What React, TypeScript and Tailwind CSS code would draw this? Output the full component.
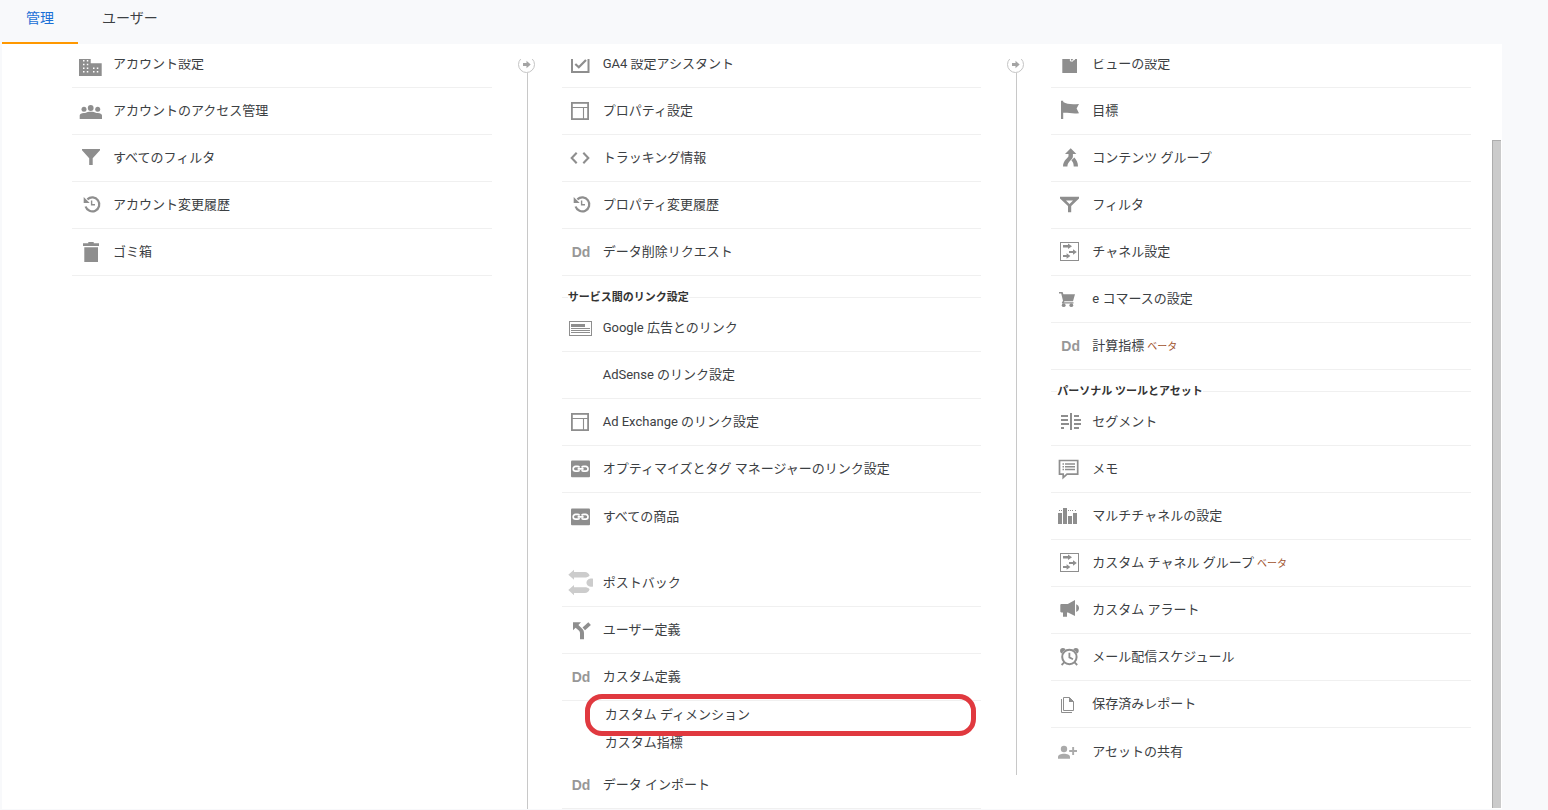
import type { ReactNode } from 'react';

type IconName =
  | 'building'
  | 'people'
  | 'filter'
  | 'history'
  | 'trash'
  | 'check'
  | 'layout'
  | 'code'
  | 'ads'
  | 'link'
  | 'postback'
  | 'split'
  | 'page'
  | 'flag'
  | 'merge'
  | 'funnel'
  | 'channel'
  | 'cart'
  | 'segment'
  | 'memo'
  | 'bars'
  | 'megaphone'
  | 'alarm'
  | 'docs'
  | 'share';

type Item = {
  label: string;
  icon?: IconName | 'Dd';
  beta?: boolean;
  last?: boolean;
  children?: string[];
};

type Group = {
  title?: string;
  spaced?: boolean;
  items: Item[];
};

const ACCOUNT: Group[] = [
  {
    items: [
      { label: 'アカウント設定', icon: 'building' },
      { label: 'アカウントのアクセス管理', icon: 'people' },
      { label: 'すべてのフィルタ', icon: 'filter' },
      { label: 'アカウント変更履歴', icon: 'history' },
      { label: 'ゴミ箱', icon: 'trash' }
    ]
  }
];

const PROPERTY: Group[] = [
  {
    items: [
      { label: 'GA4 設定アシスタント', icon: 'check' },
      { label: 'プロパティ設定', icon: 'layout' },
      { label: 'トラッキング情報', icon: 'code' },
      { label: 'プロパティ変更履歴', icon: 'history' },
      { label: 'データ削除リクエスト', icon: 'Dd' }
    ]
  },
  {
    title: 'サービス間のリンク設定',
    items: [
      { label: 'Google 広告とのリンク', icon: 'ads' },
      { label: 'AdSense のリンク設定' },
      { label: 'Ad Exchange のリンク設定', icon: 'layout' },
      { label: 'オプティマイズとタグ マネージャーのリンク設定', icon: 'link' },
      { label: 'すべての商品', icon: 'link', last: true }
    ]
  },
  {
    spaced: true,
    items: [
      { label: 'ポストバック', icon: 'postback' },
      { label: 'ユーザー定義', icon: 'split' },
      { label: 'カスタム定義', icon: 'Dd', children: ['カスタム ディメンション', 'カスタム指標'] },
      { label: 'データ インポート', icon: 'Dd' }
    ]
  }
];

const VIEW: Group[] = [
  {
    items: [
      { label: 'ビューの設定', icon: 'page' },
      { label: '目標', icon: 'flag' },
      { label: 'コンテンツ グループ', icon: 'merge' },
      { label: 'フィルタ', icon: 'funnel' },
      { label: 'チャネル設定', icon: 'channel' },
      { label: 'e コマースの設定', icon: 'cart' },
      { label: '計算指標', icon: 'Dd', beta: true }
    ]
  },
  {
    title: 'パーソナル ツールとアセット',
    items: [
      { label: 'セグメント', icon: 'segment' },
      { label: 'メモ', icon: 'memo' },
      { label: 'マルチチャネルの設定', icon: 'bars' },
      { label: 'カスタム チャネル グループ', icon: 'channel', beta: true },
      { label: 'カスタム アラート', icon: 'megaphone' },
      { label: 'メール配信スケジュール', icon: 'alarm' },
      { label: '保存済みレポート', icon: 'docs' },
      { label: 'アセットの共有', icon: 'share', last: true }
    ]
  }
];

const HIGHLIGHTED = 'カスタム ディメンション';

// Every drawing uses the same 41x46 slot, which is the space left of a row label.
const ICONS: Record<IconName, ReactNode> = {
  building: (
    <>
      <path d="M7 14H18.7V22.3H29.7V35H7Z" />
      <path
        fill="#fff"
        d="M11 19h1.5v1.5h-1.5zM14.8 19h1.5v1.5h-1.5zM11 22.7h1.5v1.5h-1.5zM14.8 22.7h1.5v1.5h-1.5zM11 26.4h1.5v1.5h-1.5zM14.8 26.4h1.5v1.5h-1.5zM11 30h1.5v1.5h-1.5zM14.8 30h1.5v1.5h-1.5zM21 26.4h1.5v1.5h-1.5zM24.8 26.4h1.5v1.5h-1.5zM21 30h1.5v1.5h-1.5zM24.8 30h1.5v1.5h-1.5z"
      />
    </>
  ),
  people: (
    <>
      <circle cx="12" cy="21.3" r="2.5" />
      <circle cx="18.7" cy="20" r="2.9" />
      <circle cx="25.7" cy="21.3" r="2.5" />
      <path d="M7.7 31V27.5C7.7 25.3 10.5 24.6 13.2 25C16 23.4 21.5 23.4 24.3 25C27.2 24.6 30 25.3 30 27.5V31Z" />
    </>
  ),
  filter: <path d="M10 14H28V15.2L20.7 23.3V30H17.2V23.3L10 15.2Z" />,
  history: (
    <>
      <path d="M13.6 24.5A7 7 0 1 0 15.4 17.4" fill="none" stroke="currentColor" strokeWidth="2.2" />
      <path d="M11.7 15V21H17.7Z" />
      <path d="M19.6 18.5V22.8H23" fill="none" stroke="currentColor" strokeWidth="1.4" />
    </>
  ),
  trash: <path d="M16.3 13H21.7V14.2H27V17H11V14.2H16.3ZM12.3 18.3H26V33H12.3Z" />,
  check: (
    <>
      <rect x="10" y="15" width="16.5" height="16" fill="none" stroke="currentColor" strokeWidth="2" />
      <path d="M13.3 23L16.8 26.3L24 19" fill="none" stroke="currentColor" strokeWidth="2.2" />
    </>
  ),
  layout: (
    <>
      <rect x="9.9" y="14.9" width="16.2" height="16.2" fill="none" stroke="currentColor" strokeWidth="1.8" />
      <path d="M10 19.5H26M21.5 19.5V31" fill="none" stroke="currentColor" strokeWidth="1.1" />
    </>
  ),
  code: <path d="M14.7 17.8L9.7 23L14.7 28.2M21.3 17.8L26.3 23L21.3 28.2" fill="none" stroke="currentColor" strokeWidth="2.1" />,
  ads: (
    <>
      <rect x="7.5" y="16.5" width="22" height="14" fill="none" stroke="currentColor" />
      <path d="M9 19H23V22H9ZM9 23H28V24H9ZM9 25H28V26H9ZM9 27H28V28H9Z" />
    </>
  ),
  link: (
    <>
      <rect x="9" y="14.5" width="19" height="16.8" rx="1" />
      <path
        d="M17.6 21.4C17 20.6 16.3 20.4 15.4 20.4H13.6A2.4 2.4 0 0 0 13.6 25.2H15.4C16.3 25.2 17 25 17.6 24.2M19.6 21.4C20.2 20.6 20.9 20.4 21.8 20.4H23.6A2.4 2.4 0 0 1 23.6 25.2H21.8C20.9 25.2 20.2 25 19.6 24.2M15.6 22.8H21.6"
        fill="none"
        stroke="#fff"
        strokeWidth="1.7"
      />
    </>
  ),
  postback: (
    <g fill="#ccc">
      <path d="M6.3 14.7L12 9.8V11.9H23C25.2 11.9 26.7 13.2 27.6 15.6C26.4 17.2 24.8 17.6 22.5 17.6H12V19.8Z" />
      <path d="M6.3 30L12 24.9V27.2H22.5C24.8 27.2 26.4 27.6 27.6 29.2C26.7 31.7 25.2 33 23 33H12V35.2Z" />
      <path d="M31 18.8V26.6C28.5 27.4 24.5 26 24.5 22.7C24.5 19.4 28.5 18 31 18.8Z" />
    </g>
  ),
  split: (
    <>
      <path d="M11 15.3H19L16.4 17.9L20 21.5C21.4 23 22 24 22 26.2V32.3H18V26.4C18 25.1 17.7 24.6 16.8 23.6L13.6 20.7L11 23.3Z" />
      <path d="M21.8 21.8L27.6 16.6" stroke="currentColor" strokeWidth="3.8" />
    </>
  ),
  page: (
    <>
      <path d="M11.3 13H26V32H11.3Z" />
      <path d="M19.4 14V20H22V18.6H24" fill="none" stroke="#fff" strokeWidth="1" />
    </>
  ),
  flag: <path d="M10 12.7H12.2V14C16 16.2 20 16.6 28 16L25.6 20.6L28 25.2C21 26 17 24.4 12.2 24.8V31H10Z" />,
  merge: (
    <>
      <path d="M19.7 13.3L25.4 18.9H21.9V21.6C21.9 24.8 16.4 26.6 16.4 31.6H12C12 25 17.5 23 17.5 21V18.9H14Z" />
      <path d="M20.4 25.3L23.4 22.6C25.6 25.2 27 27.6 27 31.6H22.7C22.7 28.8 22.1 27.2 20.4 25.3Z" />
    </>
  ),
  funnel: (
    <path
      fillRule="evenodd"
      d="M9 14.7H28V16.4L20.2 24V30.3H17V24L9 16.4ZM15 18.6L18.5 22L22 18.6Z"
    />
  ),
  channel: (
    <>
      <rect x="9.5" y="13.5" width="18" height="18" fill="none" stroke="currentColor" />
      <path d="M12 16H17V14.5L21 17.3L17 20.1V18.6H12ZM18 22H22V20.2L25.8 23L22 25.8V24H18ZM12 26H15.6V24.2L19.4 27L15.6 29.8V28H12Z" />
    </>
  ),
  cart: (
    <>
      <path d="M8 16H11.6L12.4 18.2H24L22 25.2H13.5L12.8 26.2H22.5V27.6H11.4L10.8 26.8L12 24.8L10.2 17.4H8Z" />
      <circle cx="12.7" cy="29.2" r="1.9" />
      <circle cx="20.3" cy="29.2" r="1.9" />
    </>
  ),
  segment: (
    <path d="M19 14H21V31H19ZM10 16H17V18H10ZM10 20H17V22H10ZM10 24H18V26H10ZM10 28H13V30H10ZM23 16H28V18H23ZM23 20H30V22H23ZM23 24H30V26H23ZM23 28H28V30H23Z" />
  ),
  memo: (
    <>
      <path d="M8.5 14.5H26.7V28.2H16L12.2 31.6V28.2H8.5Z" fill="none" stroke="currentColor" strokeWidth="1.7" />
      <path
        d="M11.5 18H13M14 18H24M11.5 20.7H13M14 20.7H24M11.5 23.4H13M14 23.4H24"
        fill="none"
        stroke="currentColor"
        strokeWidth="1.5"
      />
    </>
  ),
  bars: (
    <path d="M7 20H11V31H7ZM12 15H16V31H12ZM17 23H21V31H17ZM22 20H26V31H22ZM8 17H9V18H8ZM10 17H11V18H10ZM17 17H18V18H17ZM19 17H20V18H19ZM21 17H22V18H21ZM24 17H25V18H24Z" />
  ),
  megaphone: (
    <path d="M9.3 18.2C9.3 17.4 9.8 17 10.5 17H16.8L24 13V29L17 25.4H16V29.7H12V25.4H10.5C9.8 25.4 9.3 25 9.3 24.2ZM25.2 17.2C29 18.6 29 23.6 25.2 25Z" />
  ),
  alarm: (
    <>
      <circle cx="11.9" cy="16.7" r="2.8" />
      <circle cx="24.9" cy="16.7" r="2.8" />
      <circle cx="18.4" cy="23" r="8.2" fill="#fff" />
      <circle cx="18.4" cy="23" r="7.2" fill="none" stroke="currentColor" strokeWidth="2" />
      <path d="M18.4 18.8V23.4L22 25.2M13.2 28.4L10.6 31M23.6 28.4L26.2 31" fill="none" stroke="currentColor" strokeWidth="1.8" />
    </>
  ),
  docs: (
    <>
      <path d="M10.5 18V31.5H21" fill="none" stroke="currentColor" />
      <path d="M12.5 16.5H18.5L22.5 20.5V29.5H12.5Z" fill="none" stroke="currentColor" />
      <path d="M18 16L23 21H18Z" />
    </>
  ),
  share: (
    <g fill="#aaa">
      <circle cx="13" cy="20" r="3.2" />
      <path d="M7 29.7V28C7 25.7 10 24.7 13 24.7C16 24.7 19 25.7 19 28V29.7Z" />
      <path d="M21.2 18H23.1V21.1H26V22.9H23.1V26H21.2V22.9H18.2V21.1H21.2Z" />
    </g>
  )
};

function RowIcon({ name }: { name?: Item['icon'] }) {
  if (name === 'Dd') {
    return (
      <span className="w-[41px] shrink-0 pl-[10px] font-['Liberation_Sans',sans-serif] text-sm font-bold text-[#979797]">
        Dd
      </span>
    );
  }
  return (
    <svg
      viewBox="0 0 41 46"
      fill="currentColor"
      aria-hidden="true"
      className="h-[46px] w-[41px] shrink-0 text-[#8e8e8e]"
    >
      {name && ICONS[name]}
    </svg>
  );
}

function Row({ item }: { item: Item }) {
  return (
    <li>
      <a
        href="#"
        className={`flex h-[47px] items-center text-[13px] ${item.last ? '' : 'border-b border-[#f0f0f0]'}`}
      >
        <RowIcon name={item.icon} />
        <span className="whitespace-nowrap">
          {item.label}
          {item.beta && <span className="ml-[3px] text-[10px] text-[#a0522d]">ベータ</span>}
        </span>
      </a>
      {item.children && (
        <ul className="pb-[5px]">
          {item.children.map((label) => (
            <li key={label} className="relative">
              <a href="#" className="flex h-7 items-center pl-[43px] text-[13px]">
                {label}
              </a>
              {label === HIGHLIGHTED && (
                <div className="pointer-events-none absolute -top-[7px] right-[5px] left-[23px] z-10 h-[42px] rounded-[17px] border-[5px] border-[#e0393f]" />
              )}
            </li>
          ))}
        </ul>
      )}
    </li>
  );
}

function Column({ groups }: { groups: Group[] }) {
  return (
    <div className="min-w-0 flex-1">
      {groups.map((group, index) => (
        <section key={index} className={group.spaced ? 'pt-5' : ''}>
          {group.title && (
            <div className="flex h-[29px] items-center pt-[13px]">
              <div className="h-px w-[6px] bg-[#f0f0f0]" />
              <h2 className="pt-[2px] text-[11px] leading-4 font-bold text-[#333]">{group.title}</h2>
              <div className="h-px flex-1 bg-[#f0f0f0]" />
            </div>
          )}
          <ul>
            {group.items.map((item) => (
              <Row key={item.label} item={item} />
            ))}
          </ul>
        </section>
      ))}
    </div>
  );
}

function Divider() {
  return (
    <div className="flex w-[70px] shrink-0 flex-col">
      <svg viewBox="0 0 70 32" aria-hidden="true" className="h-8 w-[70px]">
        <circle cx="34.5" cy="23.5" r="8" fill="none" stroke="#c4c4c4" />
        <path d="M31 22H34.5V19.8L38.7 23.5L34.5 27.2V25H31Z" fill="#a4a4a4" />
      </svg>
      <div className="ml-[35px] flex-1 border-l border-[#c8c8c8]" />
    </div>
  );
}

export default function App() {
  return (
    <div className="min-h-screen bg-[#f8f9fb] font-['Roboto','Noto_Sans_CJK_JP',sans-serif] text-[#3c4043]">
      <nav className="flex pl-[2px] text-sm">
        <button type="button" className="h-11 border-b-2 border-[#ff9800] px-6 pb-[6px] text-[#1a6fd6]">
          管理
        </button>
        <button type="button" className="h-11 border-b-2 border-transparent px-6 pb-[6px]">
          ユーザー
        </button>
      </nav>

      <main className="mr-[46px] ml-[2px] flex bg-white pt-[15px] pr-px">
        <div className="min-w-0 flex-1 overflow-hidden">
          <div className="-mt-[18px] flex items-start pr-[21px] pl-[70px]">
            <Column groups={ACCOUNT} />
            <div className="flex flex-[2_2_140px] items-start">
              <div className="flex flex-1">
                <Divider />
                <Column groups={PROPERTY} />
              </div>
              <div className="flex flex-1">
                <Divider />
                <Column groups={VIEW} />
              </div>
            </div>
          </div>
        </div>
        <div className="mt-[81px] mb-px w-[9px] border-t border-l border-[#adadad] bg-[#cbcbcb]" />
      </main>
    </div>
  );
}
